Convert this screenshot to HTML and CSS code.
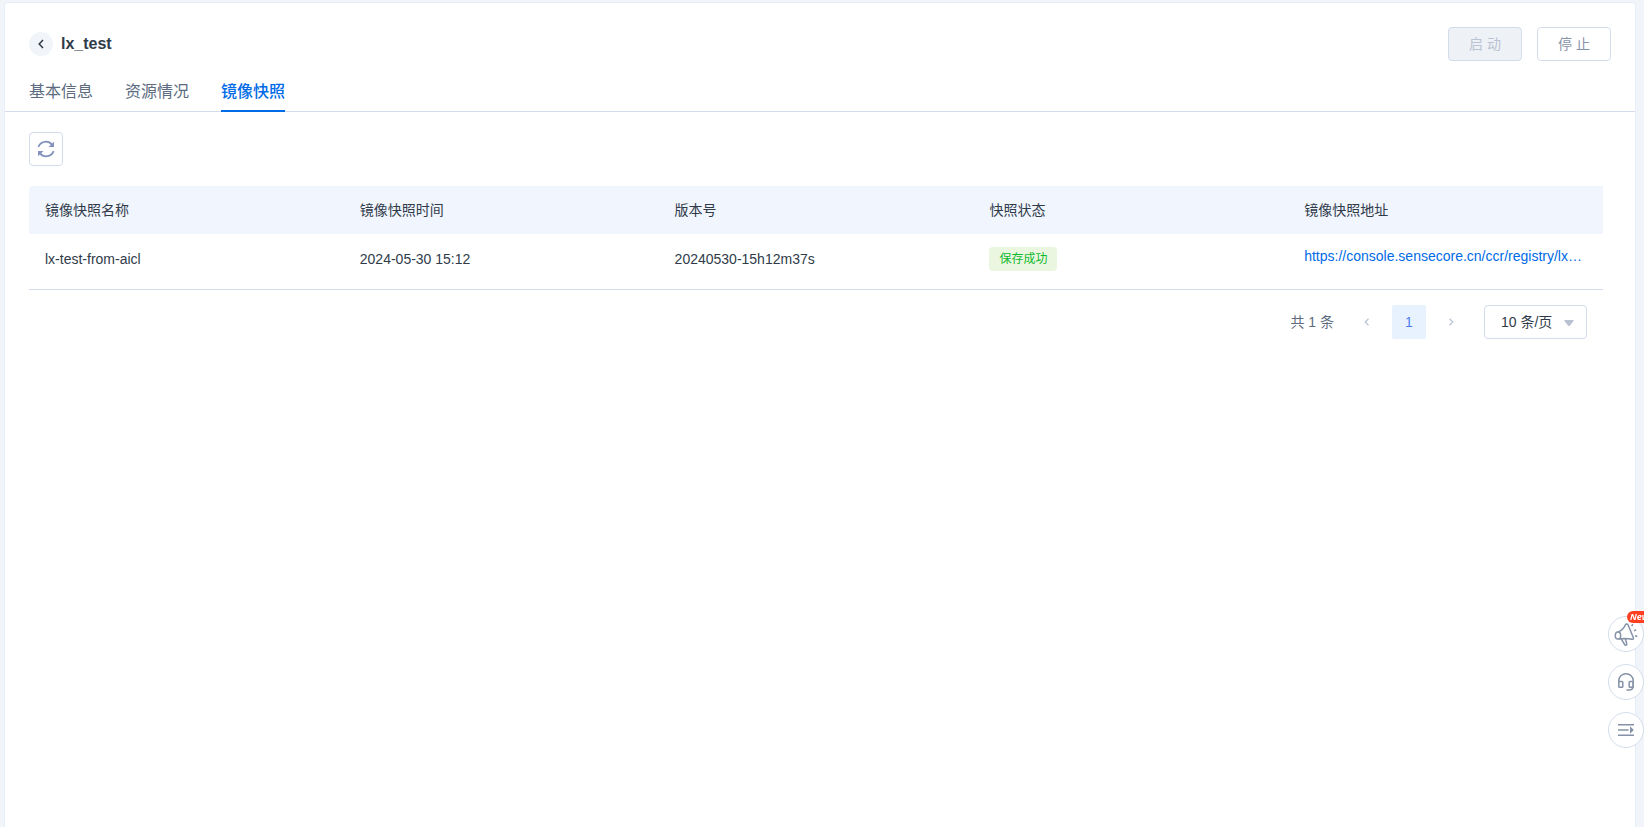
FILE: index.html
```html
<!DOCTYPE html>
<html lang="zh-CN">
<head>
<meta charset="utf-8">
<title>lx_test</title>
<link rel="stylesheet" href="styles.css">
</head>
<body>
<main class="panel">
  <header class="header">
    <button class="back" aria-label="返回"><svg width="6" height="10" viewBox="0 0 6 10"><path d="M5 1 1.2 5 5 9"/></svg></button>
    <h1 class="title">lx_test</h1>
    <div class="actions">
      <button class="btn" disabled>启 动</button>
      <button class="btn">停 止</button>
    </div>
  </header>
  <nav class="tabs">
    <a class="tab" href="#info">基本信息</a>
    <a class="tab" href="#resource">资源情况</a>
    <a class="tab tab-active" href="#snapshot" aria-current="page">镜像快照</a>
  </nav>
  <section class="content">
    <button class="refresh" aria-label="刷新">
      <svg width="18" height="18" viewBox="0 0 18 18"><path class="stroke" d="M1.400 6.800A8 8 0 0 1 15 4.600M16.600 11.200A8 8 0 0 1 3 13.400"/><path class="fill" d="M17 1.800V7h-5.500zM1 16.200V11h5.500z"/></svg>
    </button>
    <table class="table">
      <thead>
        <tr><th>镜像快照名称</th><th>镜像快照时间</th><th>版本号</th><th>快照状态</th><th>镜像快照地址</th></tr>
      </thead>
      <tbody>
        <tr>
          <td>lx-test-from-aicl</td>
          <td>2024-05-30 15:12</td>
          <td>20240530-15h12m37s</td>
          <td><span class="tag">保存成功</span></td>
          <td class="address"><a class="link" href="#registry">https://console.sensecore.cn/ccr/registry/lx…</a></td>
        </tr>
      </tbody>
    </table>
    <div class="pagination">
      <span class="total">共 1 条</span>
      <button class="page arrow" aria-label="上一页" disabled><svg width="6" height="8" viewBox="0 0 6 8"><path d="M4.500.8 1.200 4l3.300 3.200"/></svg></button>
      <button class="page page-active" aria-current="page">1</button>
      <button class="page arrow" aria-label="下一页" disabled><svg width="6" height="8" viewBox="0 0 6 8"><path d="M1.500.8 4.800 4 1.500 7.200"/></svg></button>
      <span class="size">
        <select class="size-select" aria-label="每页条数"><option>10 条/页</option></select>
        <svg class="caret" width="10" height="6" viewBox="0 0 10 6"><path d="M1 0h8q1 0 .6 1L6 5.400q-1 1-2 0L.4 1Q0 0 1 0z"/></svg>
      </span>
    </div>
  </section>
</main>
<aside class="float">
  <button class="round" aria-label="公告">
    <svg width="24" height="24" viewBox="0 0 24 24"><ellipse cx="4" cy="13.500" rx="2.700" ry="3.600"/><path d="M4 9.900C7.500 8.700 10 6 11.300 3c.6-1.300 2.200-1.300 2.800 0l5.200 12.500c.4 1.300-.4 2.100-1.600 1.800-3.500-1-8-1.200-13.200-.2M7.300 17.200l3.300 5.300c.9 1.200 2.500.6 2.100-.9l-1.300-4.800M17.600 4l1.300-1.900M20 8.800l2.200-.9M21 13.800l2.300.6"/></svg>
    <span class="badge">New</span>
  </button>
  <button class="round" aria-label="客服">
    <svg width="16" height="18" viewBox="0 0 16 18"><path d="M.8 9V7.500a7.200 6.700 0 0 1 14.400 0V13q0 3.500-3.500 4H8.500"/><rect x=".8" y="8.500" width="4" height="5.800" rx=".8"/><rect x="11.200" y="8.500" width="4" height="5.800" rx=".8"/></svg>
  </button>
  <button class="round" aria-label="收起">
    <svg width="16" height="12" viewBox="0 0 16 12"><path d="M0 .8h16M0 6h10.500M0 11.200h16"/><path class="solid" d="M12 2.300v7.400L15.800 6z"/></svg>
  </button>
</aside>
</body>
</html>
```
FILE: styles.css
```css
* { box-sizing: border-box; }
body {
  margin: 0;
  padding: 2px 8px 0 4px;
  min-height: 100vh;
  display: flex;
  background: #f1f5f9;
  color: #303b4a;
  font: 14px/20px "Liberation Sans", "Noto Sans CJK SC", sans-serif;
  overflow: hidden;
}
button, select { font: inherit; padding: 0; margin: 0; }
button { display: flex; align-items: center; justify-content: center; }
svg { display: block; fill: none; stroke: currentColor; stroke-width: 1.5; }
.panel {
  flex: 1;
  min-width: 0;
  background: #fff;
  border: 1px solid #e8edfa;
  border-bottom: 0;
  border-radius: 4px 4px 0 0;
}
.header { display: flex; align-items: center; padding: 24px 24px 0; }
.back {
  width: 24px;
  height: 24px;
  border: 0;
  border-radius: 50%;
  background: #f1f5f9;
  color: #303b4a;
}
.title { margin: 0 0 0 8px; font-size: 16px; line-height: 24px; }
.actions { display: flex; gap: 15px; margin-left: auto; }
.btn {
  width: 74px;
  height: 34px;
  border: 1px solid #d3dcea;
  border-radius: 4px;
  background: #fff;
  color: #8592a8;
}
.btn:disabled { background: #eef1f6; color: #bac3d3; }
.tabs { display: flex; gap: 32px; padding: 10px 24px 0; border-bottom: 1px solid #d3dcea; }
.tab {
  padding: 8px 0 6px;
  margin-bottom: -1px;
  border-bottom: 2px solid transparent;
  color: #5c6b80;
  font-size: 16px;
  line-height: 25px;
  text-decoration: none;
}
.tab-active { color: #006be6; border-color: #006be6; font-weight: 500; }
.content { padding: 20px 32px 0 24px; }
.refresh {
  width: 34px;
  height: 34px;
  border: 1px solid #d3dcea;
  border-radius: 4px;
  background: #fff;
  color: #8393bc;
}
.refresh .stroke { stroke-width: 1.8; }
.refresh .fill { fill: currentColor; stroke: none; }
.table { width: 100%; margin-top: 20px; border-spacing: 0; table-layout: fixed; }
th { height: 48px; padding: 0 16px; background: #f1f5fd; font-weight: 400; text-align: left; }
th:first-child { border-top-left-radius: 4px; }
td { height: 56px; padding: 0 16px 5px; border-bottom: 1px solid #d3dcea; }
.tag {
  display: inline-block;
  padding: 0 10px;
  border-radius: 4px;
  background: #eaf6e0;
  color: #12b930;
  font-size: 12px;
  line-height: 24px;
}
.address { padding-bottom: 12px; white-space: nowrap; }
.link { color: #006be6; text-decoration: none; }
.pagination { display: flex; align-items: center; justify-content: flex-end; gap: 8px; padding: 15px 16px 0 0; }
.total { margin-right: 8px; color: #5c6b80; }
.page { width: 34px; height: 34px; border: 0; border-radius: 2px; background: #fff; color: #b9c2d3; }
.page-active { background: #e8f2ff; color: #4c7cf0; }
.arrow svg { stroke-width: 1.2; }
.size { position: relative; margin-left: 8px; }
.size-select {
  display: block;
  width: 103px;
  height: 34px;
  padding: 0 16px;
  border: 1px solid #d3dcea;
  border-radius: 4px;
  background: #fff;
  color: #303b4a;
  appearance: none;
}
.caret { position: absolute; top: 15px; right: 13px; fill: #b9c2d3; stroke: none; pointer-events: none; }
.float { position: fixed; right: 0; bottom: 79px; display: grid; gap: 12px; }
.round {
  position: relative;
  width: 36px;
  height: 36px;
  border: 1px solid #d3dcea;
  border-radius: 50%;
  background: #fff;
  color: #8592a8;
}
.round .solid { fill: currentColor; stroke: none; }
.badge {
  position: absolute;
  top: -6px;
  left: 18px;
  padding: 0 3px;
  border-radius: 6px;
  background: #ff4020;
  color: #fff;
  font: italic 700 9px/12px "Open Sans", sans-serif;
}
```
